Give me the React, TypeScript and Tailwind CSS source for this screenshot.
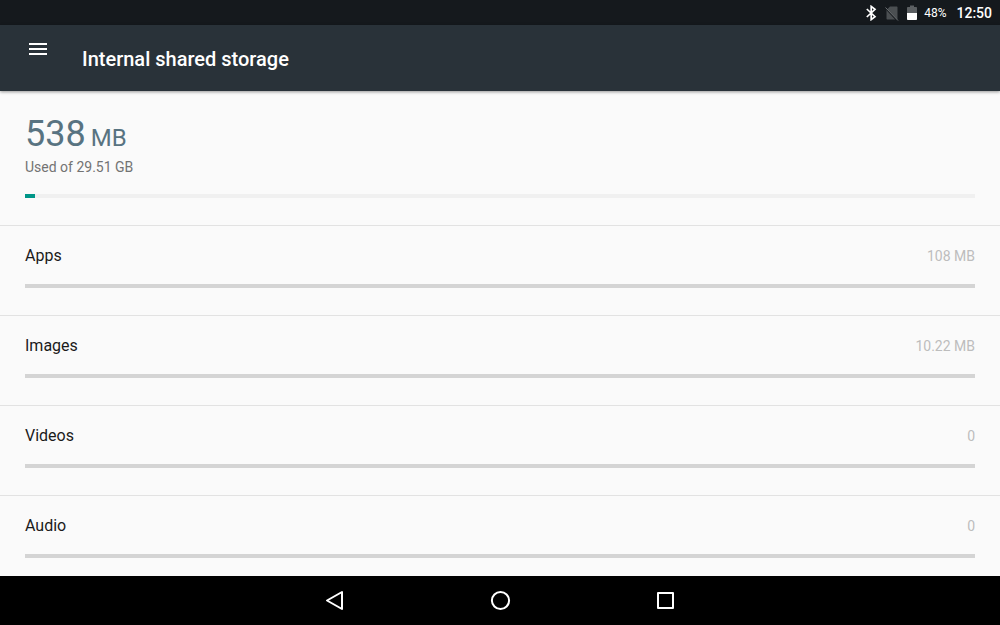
import { MdMenu } from 'react-icons/md';

interface StorageCategory {
  name: string;
  size: string;
}

const categories: StorageCategory[] = [
  { name: 'Apps', size: '108 MB' },
  { name: 'Images', size: '10.22 MB' },
  { name: 'Videos', size: '0' },
  { name: 'Audio', size: '0' },
];

function BluetoothIcon() {
  return (
    <svg
      width="12"
      height="16"
      viewBox="0 0 12 16"
      fill="none"
      stroke="currentColor"
      strokeWidth="1.700"
      role="img"
      aria-label="Bluetooth on"
    >
      <path d="M1.800 4L10 11.700 6.200 14.600V1.400L10 4.300 1.800 12" />
    </svg>
  );
}

function NoSimIcon() {
  return (
    <svg width="14" height="16" viewBox="0 0 14 16" role="img" aria-label="No SIM card">
      <path d="M5 1.500h6.500c.6 0 1 .4 1 1v11c0 .6-.4 1-1 1h-9c-.6 0-1-.4-1-1V5z" fill="#4b4f52" />
      <path d="M1 3.500L12 15.500" stroke="#15191d" strokeWidth="1.500" />
      <path d="M0.500 2.500L13 15.500" stroke="#6d7174" strokeWidth="1" />
    </svg>
  );
}

function BatteryIcon() {
  return (
    <svg width="10" height="16" viewBox="0 0 10 16" aria-hidden="true">
      <path d="M3 0.5h4v1.500h2.200c.4 0 .8.3.8.8V9H0V2.800c0-.5.4-.8.8-.8H3z" fill="#5b5f62" />
      <path d="M0 8h10v6.200c0 .4-.4.8-.8.8H.8c-.4 0-.8-.4-.8-.8z" fill="#fff" />
    </svg>
  );
}

function StatusBar() {
  return (
    <div className="flex h-[25px] shrink-0 items-center justify-end bg-[#15191d] pr-2 text-white">
      <div className="mr-[7px] flex items-center gap-2">
        <BluetoothIcon />
        <NoSimIcon />
        <BatteryIcon />
      </div>
      <span className="pt-px text-xs">48%</span>
      <span className="ml-[10px] pt-px text-sm font-medium">12:50</span>
    </div>
  );
}

function Header() {
  return (
    <header className="z-10 flex h-[66px] shrink-0 items-start bg-[#293239] px-[26px] text-white shadow-[0_1px_3px_rgba(0,0,0,0.4)]">
      <button type="button" aria-label="Open navigation" className="mt-3">
        <MdMenu size={24} />
      </button>
      <h1 className="mt-5 ml-8 text-xl leading-7 font-medium">Internal shared storage</h1>
    </header>
  );
}

function Summary() {
  return (
    <section className="h-[135px] shrink-0 border-b border-[#e2e2e2] px-[25px] pt-[23px]">
      <p className="flex items-baseline gap-[5px] text-[#587381]">
        <span className="text-4xl">538</span>
        <span className="text-2xl">MB</span>
      </p>
      <p className="mt-[3px] text-sm text-[#737373]">Used of 29.51 GB</p>
      <div
        role="progressbar"
        aria-label="Storage used"
        aria-valuenow={1}
        className="mt-[17px] h-1 bg-[#f0f0f0]"
      >
        <div className="h-full w-[1%] bg-[#009688]" />
      </div>
    </section>
  );
}

function CategoryRow({ name, size }: StorageCategory) {
  return (
    <li className="h-[90px] shrink-0 border-b border-[#e2e2e2] px-[25px] pt-[18px]">
      <a href="#" className="block">
        <div className="flex items-center justify-between">
          <span className="text-base text-[#1a1a1a]">{name}</span>
          <span className="text-sm text-[#bdbdbd]">{size}</span>
        </div>
        <div className="mt-4 h-1 bg-[#d4d4d4]" />
      </a>
    </li>
  );
}

function NavigationBar() {
  return (
    <nav className="flex h-[49px] shrink-0 items-center justify-center gap-[142px] bg-black text-white">
      <button type="button" aria-label="Back">
        <svg width="24" height="24" viewBox="0 0 24 24" fill="none" stroke="currentColor" strokeWidth="2" strokeLinejoin="round">
          <path d="M20 3v17L5 11.500z" />
        </svg>
      </button>
      <button type="button" aria-label="Home">
        <svg width="24" height="24" viewBox="0 0 24 24" fill="none" stroke="currentColor" strokeWidth="2">
          <circle cx="12.500" cy="11.500" r="8.600" />
        </svg>
      </button>
      <button type="button" aria-label="Recent apps">
        <svg width="24" height="24" viewBox="0 0 24 24" fill="none" stroke="currentColor" strokeWidth="2" strokeLinejoin="round">
          <rect x="4" y="4" width="15" height="15" />
        </svg>
      </button>
    </nav>
  );
}

export default function App() {
  return (
    <div className="flex h-screen flex-col bg-[#fafafa] font-['Roboto',sans-serif]">
      <StatusBar />
      <Header />
      <main className="flex min-h-0 flex-1 flex-col overflow-hidden">
        <Summary />
        <ul>
          {categories.map((category) => (
            <CategoryRow key={category.name} {...category} />
          ))}
        </ul>
      </main>
      <NavigationBar />
    </div>
  );
}
